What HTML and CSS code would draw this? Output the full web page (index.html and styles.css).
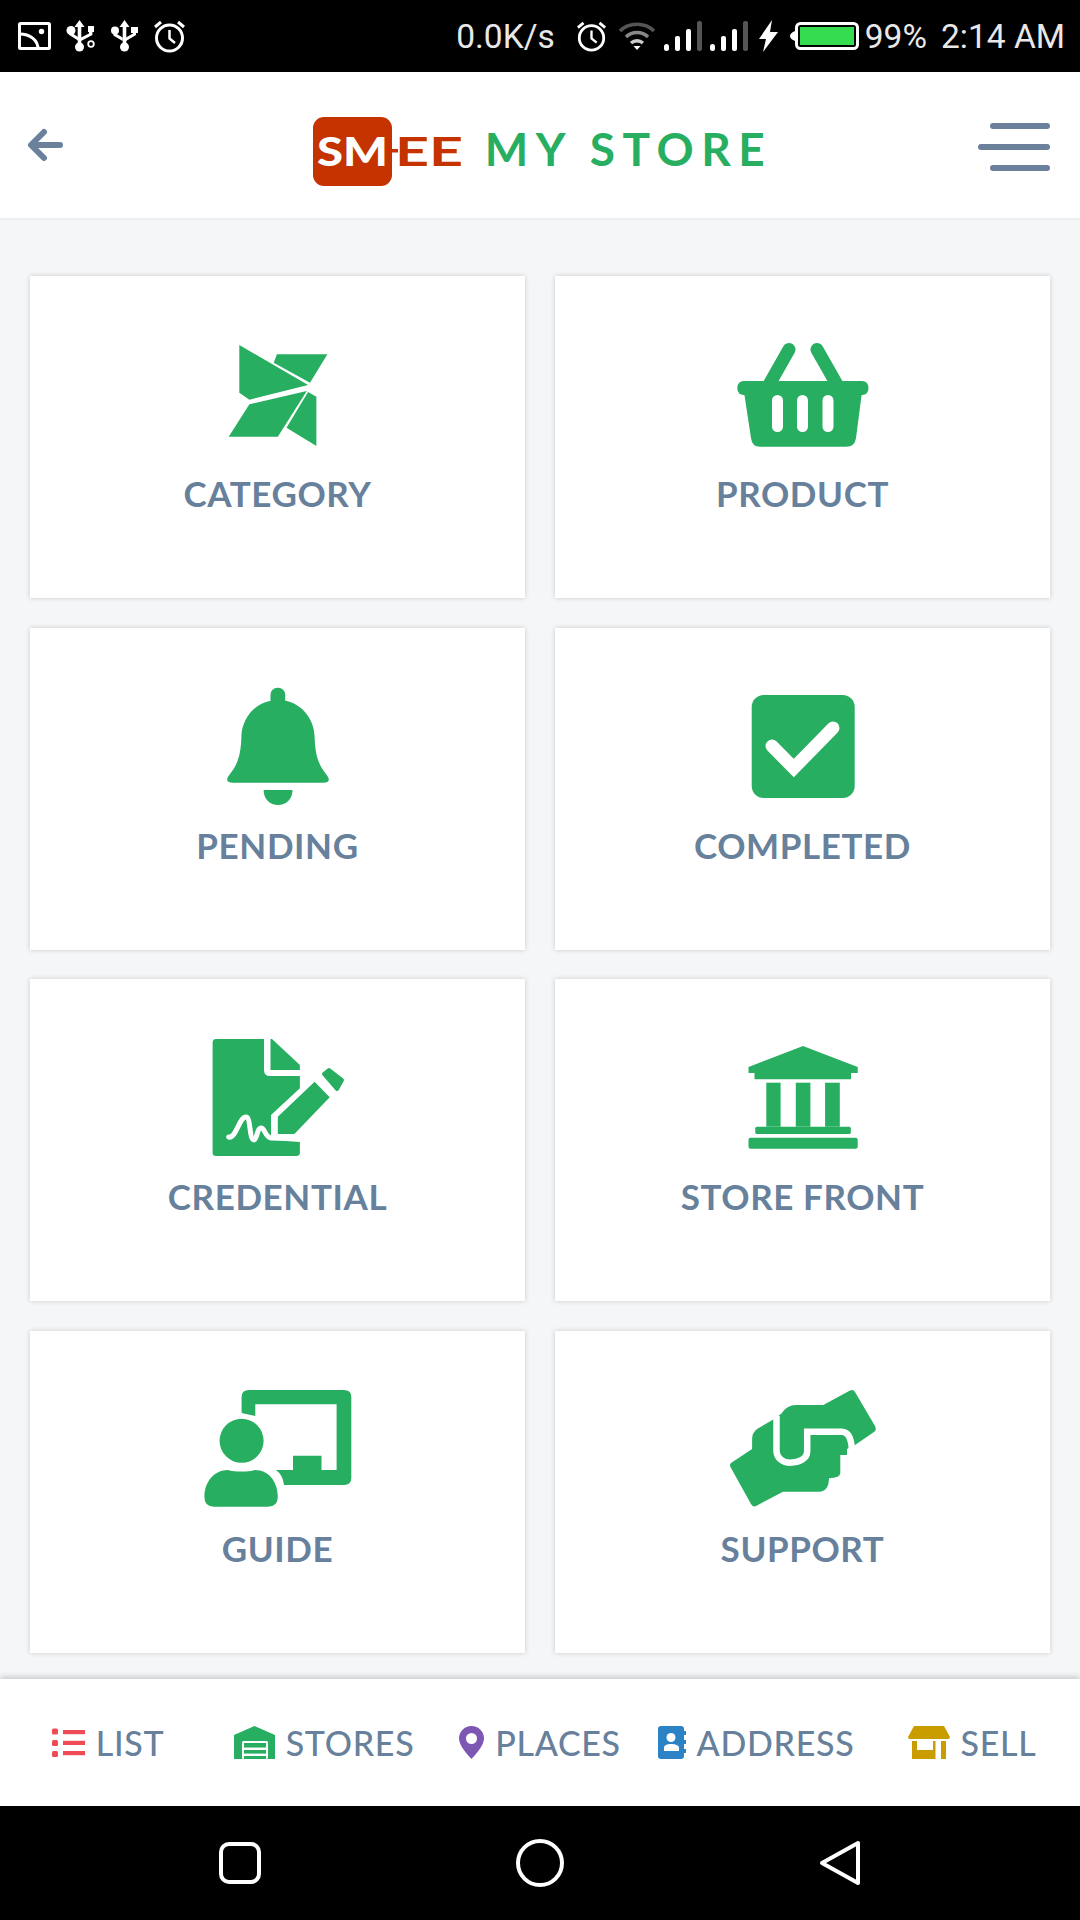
FILE: index.html
```html
<!DOCTYPE html>
<html lang="en">
<head>
  <meta charset="UTF-8" />
  <meta name="viewport" content="width=device-width, initial-scale=1.0" />
  <title>Smee My Store</title>
  <link rel="stylesheet" href="styles.css">
</head>
<body>
  <div class="statusbar">
    <div class="status-left">
      <svg width="33" height="28" viewBox="0 0 33 28" fill="none" stroke="#fff" stroke-width="3"><rect x="1.5" y="1.5" width="30" height="25" rx="1"/><path d="M1.5 12C12 12 20 18 20 27"/><circle cx="23.5" cy="9.5" r="2.7" fill="#fff" stroke="none"/></svg>
      <svg width="30" height="32" viewBox="0 0 30 32" fill="#fff"><path d="M13.5 0l5 7h-3.2v18h-3.6V7H8.5z"/><circle cx="13.5" cy="27" r="4.5"/><circle cx="5" cy="10.5" r="4.5"/><path d="M22 6h6v6h-1.6v3L15 21v-3.5l8-4V12h-1z"/><path d="M3.3 12h3.4v1.5L12 17v3.5L3.3 15z"/><circle cx="25" cy="24" r="2.8" fill="none" stroke="#fff" stroke-width="1.8"/></svg>
      <svg width="27" height="32" viewBox="0 0 27 32" fill="#fff"><path d="M13.5 0l5 7h-3.2v18h-3.6V7H8.5z"/><circle cx="13.5" cy="27" r="4.5"/><circle cx="4" cy="10.5" r="4"/><path d="M20 7h7v6h-2v2l-10 6v-3.5l7-4V13h-2z"/><path d="M2.3 12h3.4v2l6 3.5V21L2.3 15.500z"/></svg>
      <svg class="alarm-icon" width="33" height="33" viewBox="0 0 33 33" fill="none" stroke="#fff"><circle cx="16.500" cy="18" r="13" stroke-width="3"/><path d="M16.500 10v8.500l5.500 4.500" stroke-width="2.500"/><path d="M2 7l6-5M31 7l-6-5" stroke-width="3"/></svg>
    </div>
    <div class="status-right">
      <span class="net-speed">0.0K/s</span>
      <svg class="alarm-icon" width="31" height="31" viewBox="0 0 33 33" fill="none" stroke="#fff"><circle cx="16.500" cy="18" r="13" stroke-width="3"/><path d="M16.500 10v8.500l5.500 4.500" stroke-width="2.500"/><path d="M2 7l6-5M31 7l-6-5" stroke-width="3"/></svg>
      <svg class="wifi" width="38" height="30" viewBox="0 0 38 30" fill="none" stroke-width="3.500"><path d="M2 10C11 1 27 1 36 10" stroke="#555"/><path d="M8 16C14 10 24 10 30 16" stroke="#888"/><path d="M13 22c3.500-3 8.500-3 12 0" stroke="#ccc"/><path d="M15.500 25h7L19 29z" fill="#fff" stroke="none"/></svg>
      <svg class="signal" width="38" height="31" viewBox="0 0 38 31"><rect x="0" y="23" width="5" height="7" rx="2.500" fill="#fff"/><rect x="11" y="15" width="5" height="15" rx="2" fill="#fff"/><rect x="22" y="8" width="5" height="22" rx="2" fill="#fff"/><rect x="33" y="0" width="5" height="30" rx="2" fill="#555"/></svg>
      <svg class="signal" width="38" height="31" viewBox="0 0 38 31"><rect x="0" y="23" width="5" height="7" rx="2.500" fill="#fff"/><rect x="11" y="15" width="5" height="15" rx="2" fill="#fff"/><rect x="22" y="8" width="5" height="22" rx="2" fill="#fff"/><rect x="33" y="0" width="5" height="30" rx="2" fill="#555"/></svg>
      <svg class="bolt" width="19" height="32" viewBox="0 0 19 32" fill="#fff"><path d="M13 0L0 19h7L4 32 19 12h-8z"/></svg>
      <svg class="battery" width="69" height="28" viewBox="0 0 69 28"><path d="M5 9C2 10 0 12 0 14s2 4 5 5z" fill="#fff"/><rect x="6.500" y="1.500" width="61" height="25" rx="4" fill="#000" stroke="#fff" stroke-width="3"/><rect x="10" y="5" width="54" height="18" fill="#35dc4f"/></svg>
      <span class="battery-pct">99%</span>
      <span class="clock">2:14 AM</span>
    </div>
  </div>

  <div class="header">
    <svg class="back" width="36" height="34" viewBox="0 0 36 34" fill="none" stroke="#6b809b" stroke-width="6" stroke-linecap="round" stroke-linejoin="round"><path d="M33 17H5M17 4L4 17l13 13"/></svg>
    <div class="brand">
      <svg class="logo" width="150" height="69" viewBox="0 0 150 69">
        <rect width="79" height="69" rx="11" fill="#c43300"/>
        <rect x="79" y="32" width="6" height="3.500" fill="#c43300"/>
        <text class="logo-sm" x="4" y="49" textLength="71" lengthAdjust="spacingAndGlyphs">SM</text>
        <text class="logo-ee" x="82" y="49" textLength="68" lengthAdjust="spacingAndGlyphs">EE</text>
      </svg>
      <span class="brand-name">MY STORE</span>
    </div>
    <div class="menu">
      <span class="menu-bar"></span>
      <span class="menu-bar long"></span>
      <span class="menu-bar"></span>
    </div>
  </div>

  <div class="main">
    <div class="card">
      <svg class="card-icon" viewBox="-5 0 150 120" fill="#27ae60">
        <path d="M31.300 11L100.100 51 41.400 65.700 31.300 58.700z"/>
        <path d="M68.900 20.300H119.400L102 48.700 65.700 28.700z"/>
        <path d="M41.400 70.300L98.800 57 69.800 102.700H20.700z"/>
        <path d="M100.100 58L108.400 62.700V112L78.500 93.700z"/>
      </svg>
      <div class="card-label">CATEGORY</div>
    </div>
    <div class="card">
      <svg class="card-icon" viewBox="-5 0 150 120" fill="#27ae60">
        <path d="M56 15.500L33 56M84 15.500L107 56" fill="none" stroke="#27ae60" stroke-width="13" stroke-linecap="round"/>
        <rect x="4.400" y="47" width="131" height="14" rx="6"/>
        <path d="M11 58H129L123 104Q122 112.700 113 112.700H27Q19 112.700 18 104z"/>
        <g fill="#fff"><rect x="39" y="61" width="11" height="37" rx="5.500"/><rect x="64" y="61" width="11" height="37" rx="5.500"/><rect x="89.500" y="61" width="11" height="37" rx="5.500"/></g>
      </svg>
      <div class="card-label">PRODUCT</div>
    </div>
    <div class="card">
      <svg class="card-icon" viewBox="-5 0 150 120" fill="#27ae60">
        <rect x="62.500" y="1.700" width="14.700" height="20" rx="7"/>
        <path d="M70 14C92 14 106 32 106.600 50C107 68 110 78 118 88C123 94 121 96.700 115 96.700H25C19 96.700 17 94 22 88C30 78 33 68 33.400 50C34 32 48 14 70 14z"/>
        <path d="M55.600 104H84.500C84.500 113 78 119 70 119C62 119 55.600 113 55.600 104z"/>
      </svg>
      <div class="card-label">PENDING</div>
    </div>
    <div class="card">
      <svg class="card-icon" viewBox="-5 0 150 120" fill="#27ae60">
        <rect x="18.700" y="9" width="103" height="103" rx="12"/>
        <path d="M39 60L60.800 82 100 42" fill="none" stroke="#fff" stroke-width="13" stroke-linecap="round"/>
      </svg>
      <div class="card-label">COMPLETED</div>
    </div>
    <div class="card">
      <svg class="card-icon" viewBox="-5 0 150 120" fill="#27ae60">
        <path d="M62.500 2H64L91.900 28V33H62.500z"/>
        <path d="M8 2H56V33Q56 39 62 39H91.900V51.300L63 78V103L91.900 105V116Q91.900 119 88 119H8Q4.600 119 4.600 116V6Q4.600 2 8 2z"/>
        <path d="M20.700 100C28 102 31 80 38 80C43 80 41 103 46 103C49 103 49 91 53 91C57 91 57 100 63 101H92" fill="none" stroke="#fff" stroke-width="5" stroke-linecap="round" stroke-linejoin="round"/>
        <path d="M69.800 79.700L106.600 44.700 121.700 60.300 86.400 97H69.800z"/>
        <path d="M116 37L121 33 134 43 129 52z" stroke="#27ae60" stroke-width="4" stroke-linejoin="round"/>
      </svg>
      <div class="card-label">CREDENTIAL</div>
    </div>
    <div class="card">
      <svg class="card-icon" viewBox="-5 0 150 120" fill="#27ae60">
        <path d="M70 9L15.500 30V36H21.500V42.300H118V36H124.700V30z"/>
        <rect x="33.300" y="45.700" width="14.300" height="44"/>
        <rect x="62.800" y="45.700" width="14.600" height="44"/>
        <rect x="92.100" y="45.700" width="14.700" height="44"/>
        <rect x="22.300" y="89.700" width="95.500" height="7.300" rx="1.500"/>
        <rect x="15.500" y="100.700" width="109.200" height="11" rx="2"/>
      </svg>
      <div class="card-label">STORE FRONT</div>
    </div>
    <div class="card">
      <svg class="card-icon" viewBox="-5 0 150 120" fill="#27ae60">
        <path d="M33.600 24V8Q33.600 1 41 1H136Q143.300 1 143.300 8V89Q143.300 96 136 96H76Q75 86 68 81H85V66.700H113.500V81H128.600V15.300H47.300V27z"/>
        <circle cx="33.600" cy="51.800" r="22"/>
        <path d="M-3.600 108C-3.600 92 7 81 20 81C27 83 40 83 47 81C60 81 69.800 92 69.800 108Q69.800 117.700 60 117.700H6Q-3.600 117.700 -3.600 108z"/>
      </svg>
      <div class="card-label">GUIDE</div>
    </div>
    <div class="card">
      <svg class="card-icon" viewBox="-5 0 150 120" fill="#27ae60">
        <path d="M-2 74L19.100 60V50Q19.100 44 24 40L43 29 49 24Q54 16 63 16H90.300L117 1.500Q120.500 0 122 3L142 37Q144 41 141 43L122 56 114 60V66H107.300V84Q107.300 89 96 89.300Q95.800 102.700 86 102.700H50L24 116.500Q20 119 18 115L-2 79Q-4 76 -2 74z"/>
        <path d="M43.500 27V62C43.500 69 50 73.700 57.200 73.700C66 73.700 74.200 70 74.200 62V42.700H108.700Q118 43 118.800 60" fill="none" stroke="#fff" stroke-width="6.500"/>
      </svg>
      <div class="card-label">SUPPORT</div>
    </div>
  </div>

  <div class="tabs">
    <div class="tab">
      <svg width="33" height="33" viewBox="0 0 33 33" fill="#ee4b56"><rect y="2.500" width="6" height="6" rx="1.500"/><rect y="14" width="6" height="6" rx="1.500"/><rect y="25" width="6" height="6" rx="1.500"/><rect x="11" y="4" width="22" height="4.200"/><rect x="11" y="14.800" width="22" height="4.200"/><rect x="11" y="25" width="22" height="4.200"/></svg>
      <span class="tab-label">LIST</span>
    </div>
    <div class="tab">
      <svg width="41" height="33" viewBox="0 0 41 33"><path d="M20.500 0L41 9V33H0V9z" fill="#27ae60"/><rect x="8" y="15" width="26" height="18" rx="1.500" fill="#fff"/><g fill="#27ae60"><rect x="10" y="17" width="22" height="4.500"/><rect x="10" y="24" width="22" height="3.600"/><rect x="10" y="30" width="22" height="3"/></g></svg>
      <span class="tab-label">STORES</span>
    </div>
    <div class="tab">
      <svg width="25" height="33" viewBox="0 0 25 33"><path d="M12.500 0C5.500 0 0 5.500 0 12.500C0 20 9 29 12.500 33C16 29 25 20 25 12.500C25 5.500 19.500 0 12.500 0z" fill="#7e57b2"/><circle cx="12.500" cy="12.500" r="5.500" fill="#fff"/></svg>
      <span class="tab-label">PLACES</span>
    </div>
    <div class="tab">
      <svg width="28" height="33" viewBox="0 0 28 33"><rect width="26" height="33" rx="3" fill="#2b82c4"/><g fill="#2b82c4"><rect x="25" y="5" width="3" height="4"/><rect x="25" y="14" width="3" height="4"/><rect x="25" y="23" width="3" height="4"/></g><circle cx="13" cy="11.500" r="4.500" fill="#fff"/><path d="M6 25V22C6 19 9 18 13 18S21 19 21 22V25z" fill="#fff"/></svg>
      <span class="tab-label">ADDRESS</span>
    </div>
    <div class="tab">
      <svg width="42" height="33" viewBox="0 0 42 33" fill="#c99c00"><path d="M6 0H36L42 11Q42 13 40 13H2Q0 13 0 11z"/><path d="M4 15H9V24H25V15H27.500V33H4z"/><rect x="33" y="15" width="5" height="18"/></svg>
      <span class="tab-label">SELL</span>
    </div>
  </div>

  <div class="navbar">
    <svg width="42" height="42" viewBox="0 0 42 42" fill="none" stroke="#fff" stroke-width="4"><rect x="2" y="2" width="38" height="38" rx="8"/></svg>
    <svg width="48" height="48" viewBox="0 0 48 48" fill="none" stroke="#fff" stroke-width="4"><circle cx="24" cy="24" r="22"/></svg>
    <svg width="42" height="46" viewBox="0 0 42 46" fill="none" stroke="#fff" stroke-width="4" stroke-linejoin="round"><path d="M3 23L39 3V43z"/></svg>
  </div>
</body>
</html>
```

FILE: styles.css
```css
* {
  box-sizing: border-box;
}
body {
  margin: 0;
  width: 1080px;
  height: 1920px;
  display: flex;
  flex-direction: column;
  font-family: 'Lato', 'Noto Sans', sans-serif;
  background-color: #f4f6f8;
  overflow: hidden;
}

/* phone status bar */
.statusbar {
  height: 72px;
  background-color: #000;
  color: #e8e8e8;
  display: flex;
  align-items: center;
  justify-content: space-between;
  padding: 0 15px 0 18px;
  font-family: 'Roboto', sans-serif;
  font-size: 33.5px;
}
.status-left {
  display: flex;
  align-items: center;
  gap: 15px;
}
.status-right {
  display: flex;
  align-items: center;
}
.status-right .alarm-icon { margin-left: 21px; }
.wifi { margin-left: 11px; }
.signal { margin-left: 8px; }
.bolt { margin-left: 11px; }
.battery { margin-left: 12px; }
.battery-pct { margin-left: 6px; }
.clock { margin-left: 14px; }

/* app header */
.header {
  height: 148px;
  background-color: #fff;
  border-bottom: 2px solid #eceef1;
  display: grid;
  grid-template-columns: auto 1fr auto;
  align-items: center;
  padding: 0 30px 0 27px;
}
.brand {
  display: flex;
  align-items: center;
  justify-content: center;
  gap: 22px;
  margin: 12px 0 0 44px;
}
.logo-sm {
  font-family: 'Lato', sans-serif;
  font-weight: 900;
  font-size: 39px;
  fill: #fff;
}
.logo-ee {
  font-family: 'Lato', sans-serif;
  font-weight: 700;
  font-size: 41px;
  fill: #c43300;
}
.brand-name {
  font-size: 46px;
  font-weight: 700;
  letter-spacing: 7.5px;
  color: #27ae60;
  margin-bottom: 5px;
}
.menu {
  width: 72px;
  display: flex;
  flex-direction: column;
  align-items: flex-end;
  gap: 15px;
  margin-top: 3px;
}
.menu-bar {
  width: 60px;
  height: 6px;
  border-radius: 3px;
  background-color: #6b809b;
}
.menu-bar.long {
  width: 72px;
}

/* grid of cards */
.main {
  flex: 1;
  display: grid;
  grid-template-columns: 495px 495px;
  grid-auto-rows: 322px;
  gap: 29.5px 30px;
  padding: 56px 30px 0;
}
.card {
  background-color: #fff;
  box-shadow: 0 0 5px rgba(0, 0, 0, 0.18);
  padding-top: 58px;
  display: flex;
  flex-direction: column;
  align-items: center;
}
.card-icon {
  width: 150px;
  height: 120px;
}
.card-label {
  margin-top: 17px;
  font-size: 35px;
  letter-spacing: 0.6px;
  line-height: 44px;
  font-weight: 700;
  color: #67809b;
}

/* bottom tabs */
.tabs {
  height: 127px;
  background-color: #fff;
  box-shadow: 0 -2px 6px rgba(0, 0, 0, 0.2);
  display: grid;
  grid-template-columns: repeat(5, 216px);
  position: relative;
}
.tab {
  display: flex;
  align-items: center;
  justify-content: center;
  gap: 11px;
}
.tab-label {
  font-size: 34px;
  letter-spacing: 0.7px;
  font-weight: 500;
  color: #67809b;
}

/* android nav buttons */
.navbar {
  height: 114px;
  background-color: #000;
  display: grid;
  grid-template-columns: repeat(3, 300px);
  justify-items: center;
  align-items: center;
  padding: 0 90px;
}
```
